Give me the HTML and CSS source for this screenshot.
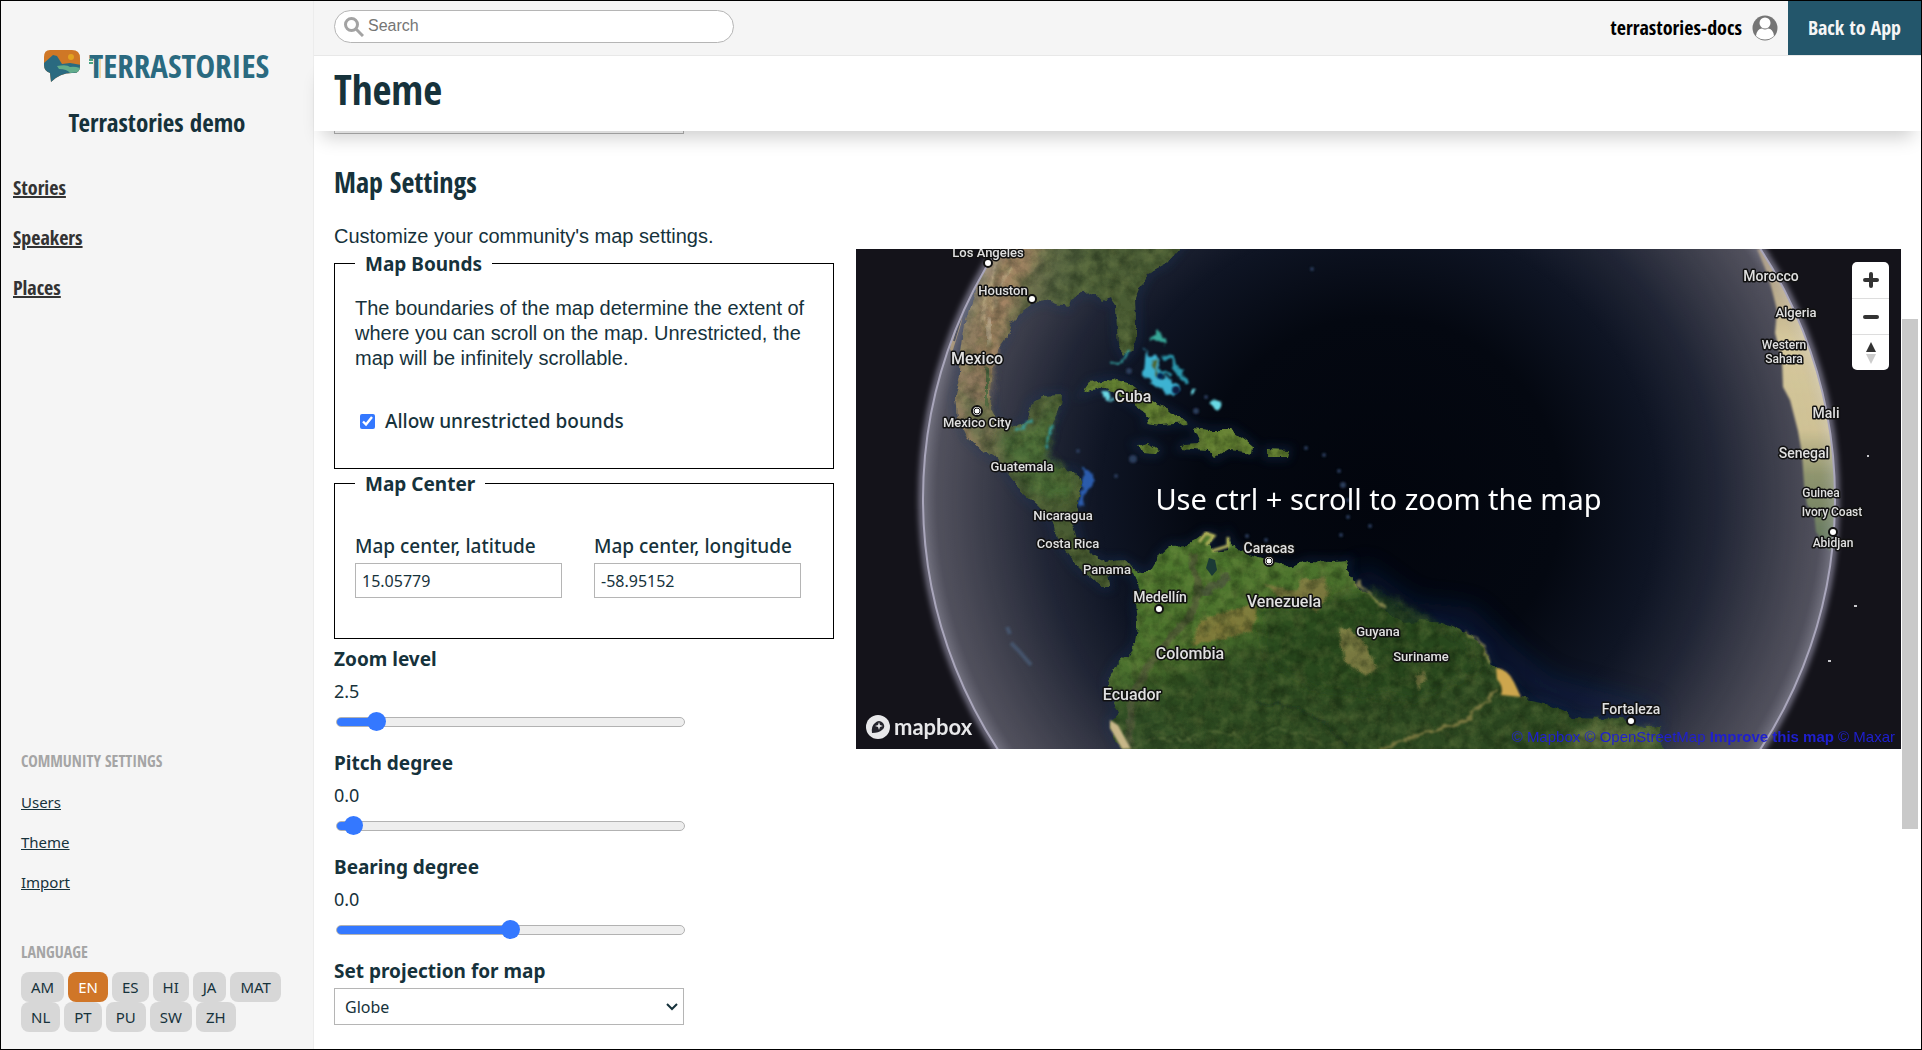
FILE: index.html
```html
<!DOCTYPE html>
<html lang="en">
<head>
<meta charset="utf-8">
<meta name="viewport" content="width=device-width, initial-scale=1">
<title>Theme - Terrastories</title>
<link rel="stylesheet" href="styles.css">
</head>
<body>
<div class="app">
  <aside class="sidebar">
    <div class="brand">
      <svg class="brand-logo" viewBox="0 0 228 36" role="img" aria-label="Terrastories">
        <defs><clipPath id="bubble"><path d="M7 1H29Q37 1 37 9V17Q37 25 29 24Q17 24 8 33L7 24Q1 22 1 16V8Q1 1 7 1Z"/></clipPath></defs>
        <g clip-path="url(#bubble)">
          <rect width="38" height="34" fill="#cf7726"/>
          <circle cx="28" cy="8" r="3" fill="#e3a220"/>
          <path d="M0 15L10 6L14 7L19 15L27 14L38 16V34H0Z" fill="#2a6a80"/>
          <path d="M14 17Q24 15 27 18Q31 17 37 19V24Q31 23 27 24Q24 20 16 20Z" fill="#62ac8b"/>
        </g>
        <text x="46" y="29" class="brand-word">TERRASTORIES</text>
        <path d="M46 11h4M46 14h4" stroke="#4aa383" stroke-width="2"/>
        <path d="M57 10V29" stroke="#e9b95b" stroke-width="1"/>
      </svg>
      <h2 class="community">Terrastories demo</h2>
    </div>
    <nav class="primary-nav">
      <a href="#stories">Stories</a>
      <a href="#speakers">Speakers</a>
      <a href="#places">Places</a>
    </nav>
    <div class="sidebar-foot">
      <h3 class="group-title">COMMUNITY SETTINGS</h3>
      <nav class="settings-nav">
        <a href="#users">Users</a>
        <a href="#theme">Theme</a>
        <a href="#import">Import</a>
      </nav>
      <h3 class="group-title">LANGUAGE</h3>
      <div class="languages">
        <a href="#am">AM</a><a href="#en" class="active">EN</a><a href="#es">ES</a><a href="#hi">HI</a><a href="#ja">JA</a><a href="#mat">MAT</a><a href="#nl">NL</a><a href="#pt">PT</a><a href="#pu">PU</a><a href="#sw">SW</a><a href="#zh">ZH</a>
      </div>
    </div>
  </aside>

  <div class="main">
    <header class="topbar">
      <label class="search">
        <svg viewBox="0 0 20 20" aria-hidden="true"><circle cx="7.500" cy="7.500" r="6" /><path d="M12 12L19 19"/></svg>
        <input type="search" placeholder="Search" aria-label="Search">
      </label>
      <div class="account">
        <span class="username">terrastories-docs</span>
        <svg class="avatar" viewBox="0 0 26 26" aria-hidden="true"><circle cx="13" cy="13" r="12.500" fill="#757575"/><circle cx="13" cy="8" r="5.500" fill="#fff"/><path d="M4 21Q5 13.500 10 13.500Q13 15.500 16 13.500Q21 13.500 22 21Q18 24.500 13 24.500Q8 24.500 4 21Z" fill="#fff"/></svg>
        <a class="back" href="#app">Back to App</a>
      </div>
    </header>
    <div class="titlebar"><h1>Theme</h1></div>

    <div class="scroller">
      <main class="content">
        <div class="previous-field"></div>
        <h2 class="section-title">Map Settings</h2>
        <p class="intro">Customize your community's map settings.</p>
        <div class="settings">
          <form class="fields">
            <fieldset>
              <legend>Map Bounds</legend>
              <p>The boundaries of the map determine the extent of where you can scroll on the map. Unrestricted, the map will be infinitely scrollable.</p>
              <label class="check"><input type="checkbox" checked>Allow unrestricted bounds</label>
            </fieldset>
            <fieldset>
              <legend>Map Center</legend>
              <div class="pair">
                <div><label for="lat">Map center, latitude</label><input id="lat" type="text" value="15.05779"></div>
                <div><label for="lng">Map center, longitude</label><input id="lng" type="text" value="-58.95152"></div>
              </div>
            </fieldset>
            <div class="field">
              <label for="zoom">Zoom level</label><output for="zoom">2.5</output>
              <input id="zoom" type="range" min="0" max="100" value="9" style="--fill:10%">
            </div>
            <div class="field">
              <label for="pitch">Pitch degree</label><output for="pitch">0.0</output>
              <input id="pitch" type="range" min="0" max="100" value="2" style="--fill:4%">
            </div>
            <div class="field">
              <label for="bearing">Bearing degree</label><output for="bearing">0.0</output>
              <input id="bearing" type="range" min="0" max="100" value="50" style="--fill:50%">
            </div>
            <div class="field">
              <label for="projection">Set projection for map</label>
              <div class="select"><select id="projection"><option>Globe</option><option>Mercator</option></select>
              <svg viewBox="0 0 12 8" aria-hidden="true"><path d="M1 1L6 6L11 1"/></svg></div>
            </div>
          </form>

          <div class="map">
            <svg class="globe" viewBox="0 0 1045 500" preserveAspectRatio="xMidYMid slice" role="img" aria-label="Satellite globe">
              <defs>
                <clipPath id="disc"><circle cx="523" cy="250" r="456"/></clipPath>
                <radialGradient id="sea"><stop offset="0" stop-color="#02050d"/><stop offset=".4" stop-color="#040811"/><stop offset=".6" stop-color="#0e1423"/><stop offset=".74" stop-color="#1c2131"/><stop offset=".86" stop-color="#343643"/><stop offset=".94" stop-color="#444450"/><stop offset="1" stop-color="#4e4d59"/></radialGradient>
                <radialGradient id="haze"><stop offset=".6" stop-color="#889" stop-opacity="0"/><stop offset=".97" stop-color="#99a" stop-opacity=".1"/><stop offset="1" stop-color="#ccd" stop-opacity=".3"/></radialGradient>
                <linearGradient id="north" gradientUnits="userSpaceOnUse" x1="112" y1="60" x2="215" y2="85"><stop offset="0" stop-color="#8b7a58"/><stop offset=".3" stop-color="#94795a"/><stop offset=".5" stop-color="#6c6e47"/><stop offset=".75" stop-color="#4f5e38"/><stop offset="1" stop-color="#485b31"/></linearGradient>
                <linearGradient id="south" gradientUnits="userSpaceOnUse" x1="350" y1="290" x2="430" y2="500"><stop offset="0" stop-color="#4f792e"/><stop offset=".42" stop-color="#4a702c"/><stop offset=".58" stop-color="#2e4d21"/><stop offset="1" stop-color="#2d4921"/></linearGradient>
                <linearGradient id="africa" x1="0" y1="0" x2="0" y2="1"><stop offset="0" stop-color="#a08d6e"/><stop offset=".3" stop-color="#dccd9c"/><stop offset=".6" stop-color="#d5c693"/><stop offset=".75" stop-color="#8f9569"/><stop offset="1" stop-color="#5b7355"/></linearGradient>
                <filter id="soft"><feGaussianBlur stdDeviation="1"/></filter>
                <filter id="cays" x="-20%" y="-20%" width="140%" height="140%">
                  <feTurbulence type="fractalNoise" baseFrequency=".12" numOctaves="3" seed="7" result="n"/>
                  <feDisplacementMap in="SourceGraphic" in2="n" scale="9" xChannelSelector="R" yChannelSelector="G"/>
                  <feGaussianBlur stdDeviation=".9"/>
                </filter>
                <filter id="glow" x="-20%" y="-20%" width="140%" height="140%"><feGaussianBlur stdDeviation="4"/></filter>
                <filter id="rim" x="-5%" y="-5%" width="110%" height="110%"><feGaussianBlur stdDeviation="3"/></filter>
                <filter id="wide" x="-50%" y="-50%" width="200%" height="200%"><feGaussianBlur stdDeviation="12"/></filter>
                <filter id="terrain" filterUnits="userSpaceOnUse" x="60" y="-10" width="800" height="520" color-interpolation-filters="sRGB">
                  <feTurbulence type="fractalNoise" baseFrequency=".08" numOctaves="5" seed="4" result="noise"/>
                  <feDisplacementMap in="SourceGraphic" in2="noise" scale="8" xChannelSelector="R" yChannelSelector="G" result="land"/>
                  <feGaussianBlur in="land" stdDeviation=".5" result="coast"/>
                  <feColorMatrix in="noise" values="0 0 0 0 .05  0 0 0 0 .1  0 0 0 0 .03  0 0 0 .9 -.33" result="dark"/>
                  <feColorMatrix in="noise" values="0 0 0 0 .6  0 0 0 0 .65  0 0 0 0 .35  0 .5 0 0 -.2" result="light"/>
                  <feComposite in="dark" in2="coast" operator="in" result="shade"/>
                  <feComposite in="light" in2="coast" operator="in" result="shine"/>
                  <feMerge><feMergeNode in="coast"/><feMergeNode in="shade"/><feMergeNode in="shine"/></feMerge>
                </filter>
                <path id="na" d="M100 -8H330L311 14L294 23L285 38L280 51L281 71V88L276 101L269 108L262 94L261 81L260 58L254 49L247 52L240 44L225 45L214 51L212 58L201 56L190 52L180 53L166 63L156 73L151 88L142 101L136 121L134 141L135 161L144 178L159 179L171 171L175 154L187 147L206 146L205 156L197 171L192 191L185 208L180 213L201 219L221 223L226 238L223 249L218 274L223 294L235 306L249 313L266 311L283 321L273 324L263 318L251 324L253 338L247 338L235 328L221 318L211 304L201 291L197 274L182 258L166 244L149 221L139 208L128 204L111 188L101 168L99 148L104 124L105 104L109 74L115 54L121 34L135 11Z"/>
                <path id="sa" d="M276 318L285 323L294 323L304 306L314 297L333 296L349 284L359 286L352 296L359 303L371 301L373 289L376 296L393 306L418 314L438 318L452 312L476 313L493 312L490 323L502 338L521 351L534 366L548 374L565 372L586 374L610 384L629 398L636 418L650 424L664 449L690 454L711 463L718 469L745 470L766 469L787 479L804 479L808 508H269L254 479V471L263 464L254 444L252 431L261 414L273 404L280 394L282 374L280 354L283 341Z"/>
                <path id="isles" d="M228 144L235 134L256 130L273 134L287 146L304 158L318 164L332 174L304 176L290 174L294 168L276 154L259 144L245 138ZM338 179L352 181L376 181L390 191L398 198L397 204L373 201L359 209L352 201L325 199L328 195L345 194ZM280 196L292 193L303 201L300 205L288 204ZM411 200L432 201L430 208L411 208Z"/>
              </defs>
              <rect width="1045" height="500" fill="#14131a"/>
              <circle cx="523" cy="250" r="457" fill="none" stroke="#b9b6d0" stroke-width="4" filter="url(#rim)"/>
              <circle cx="523" cy="250" r="456" fill="url(#sea)"/>
              <g clip-path="url(#disc)">
                <g fill="none" stroke="#18305c" stroke-width="7" opacity=".4" filter="url(#glow)"><use href="#na"/><use href="#sa"/><use href="#isles"/></g>
                <path d="M500 325L555 365L610 370L650 408L690 440L800 470" fill="none" stroke="#11275a" stroke-width="24" opacity=".45" filter="url(#wide)"/>
                <g filter="url(#cays)"><path d="M226 219Q240 220 238 232Q230 240 228 256L222 258L226 238Z" fill="#2c5cad"/></g>
                <path d="M105 36L113 30L105 75L96 104L94 100Z" fill="#a18a60"/>
                <path d="M112 44L104 72L98 92" fill="none" stroke="#2c2f3c" stroke-width="2"/>
                <g filter="url(#terrain)">
                  <use href="#na" fill="url(#north)"/>
                  <path d="M143 70L135 105L128 150L128 190" fill="none" stroke="#957c5c" stroke-width="9" filter="url(#glow)"/>
                  <path d="M150 -5H190L172 25L150 62L140 100L128 130L122 112L130 65Z" fill="#b18961" opacity=".6" filter="url(#glow)"/>
                  <path d="M141 12L125 72M155 18L140 45L136 62" fill="none" stroke="#c9b48a" stroke-width="3" opacity=".7" filter="url(#soft)"/>
                  <path d="M134 68L130 98" fill="none" stroke="#c6b79c" stroke-width="7" opacity=".6" filter="url(#soft)"/>
                  <path d="M131 118L130 160" fill="none" stroke="#48683a" stroke-width="6" filter="url(#soft)"/>
                  <path d="M104 140L120 150L135 165L130 195L112 185Z" fill="#5d6a42" opacity=".7" filter="url(#glow)"/>
                  <path d="M145 185L180 180L200 150L190 205L215 228L215 250L180 245L150 212Z" fill="#466a30" filter="url(#glow)"/>
                  <use href="#sa" fill="url(#south)"/>
                  <use href="#isles" fill="#627f31"/>
                  <path d="M404 358L440 358L520 340L600 385L625 420L560 450L460 440L410 410Z" fill="#28471f" opacity=".7" filter="url(#glow)"/>
                  <path d="M345 372L377 360L402 354L396 382L365 390L335 396Z" fill="#8d7a3c" opacity=".75" filter="url(#soft)"/>
                  <path d="M408 335L440 342L445 330L468 330L475 342L462 362L446 352L425 348Z" fill="#8b7a45" opacity=".75" filter="url(#soft)"/>
                  <path d="M482 381L495 380L512 400L520 422L508 427L488 412Z" fill="#8d8448" opacity=".8" filter="url(#soft)"/>
                  <path d="M560 428L566 422L570 432L562 440Z" fill="#72733f" filter="url(#soft)"/>
                  <path d="M336 305L343 340L336 365L315 388L290 420L276 450L272 500" fill="none" stroke="#53573a" stroke-width="8" opacity=".7" filter="url(#soft)"/>
                  <path d="M345 344L360 336L372 326" fill="none" stroke="#4d5b3b" stroke-width="8" filter="url(#soft)"/>
                  <path d="M735 473L800 482V500H705Z" fill="#6a7a42" opacity=".8" filter="url(#glow)"/>
                </g>
                <path d="M640 419Q652 420 658 433L665 448L645 446Q648 438 641 430Z" fill="#cda64e" filter="url(#soft)"/>
                <path d="M254 479V471L262 476L275 500H266Z" fill="#cbb988" filter="url(#soft)"/>
                <g filter="url(#cays)" opacity=".8">
                  <path d="M642 440L630 452L606 474L575 482L524 500" fill="none" stroke="#8c8448" stroke-width="3"/>
                  <path d="M272 500L300 489L331 492L350 482L380 485L390 498L417 480L445 484L468 497L490 492" fill="none" stroke="#6f8048" stroke-width="1"/>
                  <path d="M402 454L440 458L470 475L492 496" fill="none" stroke="#192d1d" stroke-width="2"/>
                  <path d="M500 333L514 345L528 360M610 384L628 397L634 415" fill="none" stroke="#a09a58" stroke-width="2"/>
                </g>
                <path d="M353 309l6 2l2 10l-5 6l-6 -8z" fill="#1b3a36"/>
                <path d="M343 293L350 284L358 287L350 296M356 302L372 297V288" fill="none" stroke="#b3b05c" stroke-width="3" filter="url(#soft)"/>
                <path d="M901 0L911 24L916 41L921 61L919 84L926 111L927 138L934 151L942 182L946 205L948 235L951 256L958 264L960 283L973 301L1000 300V0Z" fill="url(#africa)" filter="url(#soft)"/>
                <g filter="url(#cays)">
                  <path d="M289 100L287 124L293 134L305 141L316 145L325 140L316 133L307 128L303 118L300 104L293 108Z" fill="#3cb2d2"/>
                  <path d="M293 89L302 82L311 90L308 97L299 91Z" fill="#38a899"/>
                  <path d="M307 110l9 -3l4 12l11 15M303 120l12 8" stroke="#2b98ad" stroke-width="4" fill="none"/>
                  <path d="M298 110l3 18" stroke="#4e6a35" stroke-width="3"/>
                  <path d="M335 142l5 -2l-1 6l-4 2zM352 154l6 -4l8 4l-5 8zM242 140l6 1l12 10l-14 -2z" fill="#69d9e5"/>
                  <path d="M255 114l14 -3l4 -9M190 200l2 -12l5 -12M160 182l16 -11" stroke="#32a0a0" stroke-width="2" fill="none"/>
                </g>
                <g filter="url(#soft)">
                  <circle cx="304" cy="127" r="3" fill="#06204d"/><circle cx="320" cy="141" r="4" fill="#071c40"/>
                  <g fill="#2c3c5c"><circle cx="450" cy="199" r="2"/><circle cx="468" cy="206" r="2"/><circle cx="483" cy="222" r="2"/><circle cx="487" cy="236" r="3"/><circle cx="492" cy="251" r="2"/><circle cx="492" cy="268" r="2"/><circle cx="485" cy="286" r="2"/><circle cx="340" cy="162" r="3"/><circle cx="350" cy="148" r="2"/><circle cx="514" cy="277" r="2"/><circle cx="456" cy="20" r="2"/><circle cx="391" cy="287" r="2"/><circle cx="410" cy="291" r="2"/><circle cx="273" cy="122" r="3"/><circle cx="277" cy="210" r="4"/><circle cx="222" cy="202" r="2"/><circle cx="260" cy="227" r="2"/></g>
                  <path d="M155 394l8 8l12 14M151 378l3 7" stroke="#3f5068" stroke-width="4" fill="none"/>
                </g>
                <circle cx="523" cy="250" r="456" fill="url(#haze)"/>
              </g>
              <circle cx="523" cy="250" r="456" fill="none" stroke="#a9a6bb" stroke-width="2"/>
              <g fill="#c8c8cc"><rect x="998" y="356" width="3" height="2"/><rect x="972" y="411" width="3" height="2"/><rect x="1011" y="206" width="2" height="2"/></g>
              <g class="dots"><circle cx="132" cy="14" r="4"/><circle cx="176" cy="50" r="4"/><circle cx="303" cy="360" r="4"/><circle cx="775" cy="472" r="4"/><circle cx="977" cy="283" r="4"/><circle cx="121" cy="162" r="5"/><circle cx="413" cy="312" r="5"/></g>
              <g class="rings"><circle cx="121" cy="162" r="3"/><circle cx="413" cy="312" r="3"/></g>
              <g class="labels sm">
                <text x="965" y="248">Guinea</text><text x="976" y="267">Ivory Coast</text><text x="977" y="298">Abidjan</text><text x="928" y="100">Western</text><text x="928" y="114">Sahara</text>
              </g>
              <g class="labels md">
                <text x="132" y="8">Los Angeles</text><text x="147" y="46">Houston</text><text x="121" y="178">Mexico City</text><text x="166" y="222">Guatemala</text><text x="207" y="271">Nicaragua</text><text x="212" y="299">Costa Rica</text><text x="251" y="325">Panama</text><text x="522" y="387">Guyana</text><text x="565" y="412">Suriname</text><text x="940" y="68">Algeria</text>
              </g>
              <g class="labels ml">
                <text x="304" y="353">Medellín</text><text x="413" y="304">Caracas</text><text x="775" y="465">Fortaleza</text><text x="915" y="32">Morocco</text><text x="970" y="169">Mali</text><text x="948" y="209">Senegal</text>
              </g>
              <g class="labels lg">
                <text x="121" y="115">Mexico</text><text x="277" y="153">Cuba</text><text x="428" y="358">Venezuela</text><text x="334" y="410">Colombia</text><text x="276" y="451">Ecuador</text>
              </g>
            </svg>
            <p class="map-hint">Use ctrl + scroll to zoom the map</p>
            <div class="map-controls">
              <button type="button" aria-label="Zoom in"><svg viewBox="0 0 16 16"><path d="M8 2V14M2 8H14" stroke="#333" stroke-width="4" stroke-linecap="round"/></svg></button>
              <button type="button" aria-label="Zoom out"><svg viewBox="0 0 16 16"><path d="M2 8H14" stroke="#333" stroke-width="4" stroke-linecap="round"/></svg></button>
              <button type="button" aria-label="Reset bearing to north"><svg class="compass" viewBox="0 0 12 24"><path d="M6 1L11 11H1Z" fill="#333"/><path d="M6 23L11 13H1Z" fill="#ccc"/></svg></button>
            </div>
            <a class="mapbox" href="#mapbox"><svg viewBox="0 0 24 24" aria-hidden="true"><circle cx="12" cy="12" r="12" fill="#e8e8ea"/><path d="M6 18Q5 11 9 8Q13 4 17 8Q20 12 16 15Q13 18 6 18Z" fill="#24242c"/><path d="M13 7L14 10L17 11L14 12L13 15L12 12L9 11L12 10Z" fill="#e8e8ea"/></svg>mapbox</a>
            <div class="attribution"><a href="#mb">© Mapbox</a> <a href="#osm">© OpenStreetMap</a> <a href="#improve" class="improve">Improve this map</a> <a href="#maxar">© Maxar</a></div>
          </div>
        </div>
      </main>
      <div class="track" aria-hidden="true"><div class="thumb"></div></div>
    </div>
  </div>
</div>
</body>
</html>
```
FILE: styles.css
```css
:root {
  --ink: #16323b;
  --ui: "Noto Sans", "Open Sans", sans-serif;
  --heading: "Open Sans Condensed", "Liberation Sans Narrow", "Open Sans", sans-serif;
  --copy: "Liberation Sans", Arial, sans-serif;
}
* { box-sizing: border-box; }
body { margin: 0; color: var(--ink); font: 18px/26px var(--ui); background: #fff; }
h1, h2, h3, p { margin: 0; }
.app { display: grid; grid-template-columns: 313px minmax(0, 1fr); min-height: 100vh; border: 1px solid #000; }

.sidebar { display: flex; flex-direction: column; background: #f5f5f5; border-right: 1px solid #ececec; }
.brand { display: flex; flex-direction: column; align-items: center; padding-top: 48px; }
.brand-logo { width: 228px; height: 36px; overflow: visible; }
.brand-word { font: 700 33px var(--heading); fill: #2a6a80; }
.community { margin-top: 19px; font: 700 25px/36px var(--heading); }
.primary-nav { display: flex; flex-direction: column; align-items: flex-start; gap: 24px; padding: 35px 12px; font: 700 20px/26px var(--heading); }
.primary-nav a { color: #333; }
.sidebar-foot { margin-top: auto; padding: 0 20px 17px; }
.group-title { font: 700 16px/24px var(--heading); color: #a5a5a5; }
.settings-nav { display: flex; flex-direction: column; align-items: flex-start; gap: 16px; padding: 17px 0 46px; font-size: 15px; line-height: 24px; }
.settings-nav a { color: var(--ink); }
.languages { display: flex; flex-wrap: wrap; column-gap: 4px; padding-top: 8px; font-size: 15px; line-height: 30px; }
.languages a { padding: 0 10px; border-radius: 8px; background: #d7d7d7; color: var(--ink); text-decoration: none; }
.languages .active { background: #d07628; color: #fff; }

.main { display: flex; flex-direction: column; }
.topbar { display: flex; justify-content: space-between; height: 55px; padding-left: 20px; background: #f5f5f5; border-bottom: 1px solid #e8e8e8; }
.search { display: flex; align-items: center; gap: 4px; width: 400px; height: 33px; margin-top: 9px; padding: 0 9px; border: 1px solid #b5b5b5; border-radius: 17px; background: #fff; }
.search svg { width: 20px; height: 20px; fill: none; stroke: #a3a3a3; stroke-width: 3; }
.search input { flex: 1; min-width: 0; padding: 0 0 2px; border: 0; outline: 0; background: none; font: 16px/20px var(--copy); }
.search input::placeholder { color: #757575; }
.account { display: flex; align-items: center; gap: 10px; }
.username { color: #000; font: 700 20px/26px var(--heading); }
.avatar { width: 26px; height: 26px; }
.back { align-self: stretch; display: flex; align-items: center; padding: 0 20px; background: #23566b; color: #f5f5f5; font: 700 20px/26px var(--heading); text-decoration: none; }
.titlebar { padding: 9px 20px 18px; background: #fff; box-shadow: 0 14px 18px -8px rgba(0, 0, 0, .2); position: relative; z-index: 1; }
.titlebar h1 { font: 700 41px/48px var(--heading); }

.scroller { flex: 1; display: flex; }
.content { flex: 1; min-width: 0; padding: 0 0 12px 20px; }
.previous-field { width: 350px; height: 3px; border: solid #b5b5b5; border-width: 0 1px 1px; }
.section-title { padding: 30px 0 24px; font: 700 28px/36px var(--heading); }
.intro, fieldset p { font: 20px/25px var(--copy); }
.settings { display: grid; grid-template-columns: 500px minmax(0, 1fr); column-gap: 22px; align-items: start; }
fieldset { margin: 0; padding: 0 20px 34px; border: 1px solid #000; }
legend { padding: 2px 10px 0; font-size: 19px; font-weight: 700; }
fieldset p { padding-top: 19px; }
.check { display: flex; align-items: center; gap: 10px; padding-top: 37px; font-size: 19px; font-weight: 500; }
.check input { width: 15px; height: 15px; margin: 0 0 0 5px; accent-color: #3478ff; }
.pair { display: grid; grid-template-columns: 207px 207px; column-gap: 32px; padding: 36px 0 6px; }
.pair label { display: block; font-size: 19px; font-weight: 500; padding-bottom: 4px; white-space: nowrap; }
.pair input { width: 100%; height: 35px; padding: 0 6px; border: 1px solid #b5b5b5; color: var(--ink); font: 16px var(--ui); }
.field { display: flex; flex-direction: column; align-items: flex-start; padding: 7px 0 11px; }
.field label { font-size: 19px; font-weight: 700; }
.field output { padding-top: 6px; }
.field input { -webkit-appearance: none; appearance: none; width: 349px; height: 20px; margin: 8px 0 0 2px; background: none; }
.field input::-webkit-slider-runnable-track { height: 10px; border: 1px solid #b2b2b2; border-radius: 5px; background: linear-gradient(to right, #3478ff var(--fill), #eee var(--fill)); background-origin: border-box; }
.field input::-webkit-slider-thumb { -webkit-appearance: none; width: 19px; height: 19px; margin-top: -6px; border-radius: 50%; background: #3478ff; }
.select { display: grid; align-items: center; width: 350px; margin-top: 4px; }
.select select, .select svg { grid-area: 1 / 1; }
.select select { -webkit-appearance: none; appearance: none; height: 37px; padding: 0 10px; border: 1px solid #b5b5b5; border-radius: 0; background: #fff; color: var(--ink); font: 16px var(--ui); }
.select svg { justify-self: end; width: 12px; height: 8px; margin-right: 6px; fill: none; stroke: var(--ink); stroke-width: 2; pointer-events: none; }

.map { position: relative; height: 500px; background: #14131a; overflow: hidden; }
.globe { display: block; width: 100%; height: 100%; }
.labels { fill: #e0e0e0; stroke: #111; stroke-width: 3px; stroke-linejoin: round; paint-order: stroke; text-anchor: middle; font-family: Roboto, sans-serif; font-weight: 500; }
.sm { font-size: 12px; }
.md { font-size: 13px; }
.ml { font-size: 14px; }
.lg { font-size: 16px; }
.dots { fill: #fff; stroke: #111; stroke-width: 2; }
.rings { fill: #fff; stroke: #111; stroke-width: 1; }
.map-hint { position: absolute; inset: 0; display: grid; place-items: center; color: #fff; font-size: 29px; }
.map-controls { position: absolute; top: 13px; right: 12px; width: 37px; border-radius: 5px; background: #fff; }
.map-controls button { display: grid; place-items: center; width: 100%; height: 36px; padding: 0; border: 0; background: none; }
.map-controls button + button { border-top: 1px solid #ddd; }
.map-controls svg { width: 16px; height: 16px; }
.map-controls .compass { width: 12px; height: 24px; }
.mapbox { position: absolute; left: 10px; bottom: 9px; display: flex; align-items: center; gap: 4px; color: #e8e8ea; font: 700 22px/26px Lato, sans-serif; text-decoration: none; }
.mapbox svg { width: 24px; height: 24px; }
.attribution { position: absolute; right: 6px; bottom: 0; font: 15px/24px var(--copy); }
.attribution a { color: #1f1fd0; text-decoration: none; }
.attribution .improve { font-weight: 700; }
.track { width: 20px; padding: 188px 3px 0 1px; }
.thumb { height: 510px; background: #c9c9c9; }
```
